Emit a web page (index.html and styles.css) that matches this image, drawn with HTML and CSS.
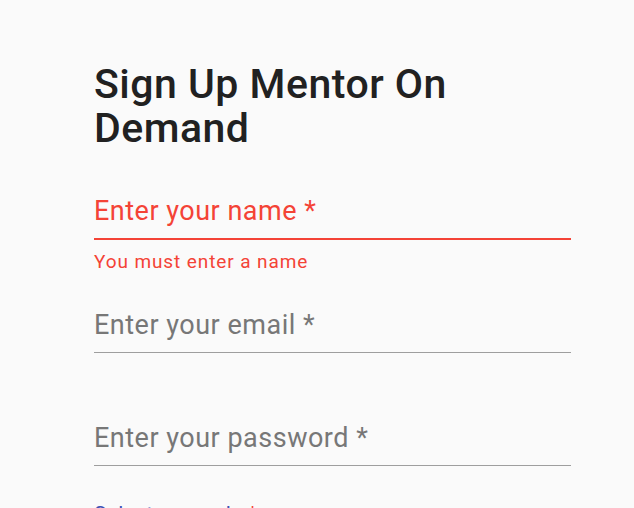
FILE: index.html
```html
<!DOCTYPE html>
<html>
<head>
<meta charset="utf-8">
<link rel="stylesheet" href="styles.css">
</head>
<body>
<div class="page">
  <h1 class="title">Sign Up Mentor On Demand</h1>
  <div class="field invalid">
    <div class="control"><span class="label">Enter your name *</span></div>
    <div class="hint">You must enter a name</div>
  </div>
  <div class="field">
    <div class="control"><span class="label">Enter your email *</span></div>
    <div class="hint"></div>
  </div>
  <div class="field">
    <div class="control"><span class="label">Enter your password *</span></div>
  </div>
  <div class="role">Select your role <span class="req">*</span></div>
</div>
</body>
</html>
```
FILE: styles.css
```css
html, body {
  margin: 0;
  padding: 0;
  background: #fafafa;
  height: 100%;
  overflow: hidden;
}
body {
  font-family: Roboto, "Liberation Sans", sans-serif;
}
.page {
  width: 477px;
  padding: 62px 0 0 94px;
}
.title {
  margin: 0 0 31px 0;
  font-size: 41px;
  line-height: 44px;
  font-weight: 500;
  letter-spacing: 0.5px;
  color: #212121;
  width: 420px;
}
.field {
  display: flex;
  flex-direction: column;
}
.control {
  padding-top: 15px;
  padding-bottom: 8px;
  border-bottom: 1.5px solid #9e9e9e;
  line-height: 30px;
}
.label {
  font-size: 27px;
  letter-spacing: 0.5px;
  color: #777777;
}
.hint {
  padding-top: 9px;
  height: 46px;
  font-size: 19px;
  line-height: 26px;
  letter-spacing: 0.9px;
  color: #f44336;
}
.invalid .control {
  border-bottom: 2px solid #f44336;
}
.invalid .label {
  color: #f44336;
}
.role {
  margin-top: 36px;
  font-size: 21px;
  line-height: 24px;
  letter-spacing: 0.3px;
  color: #3f51b5;
}
.req {
  color: #f44336;
}
```
